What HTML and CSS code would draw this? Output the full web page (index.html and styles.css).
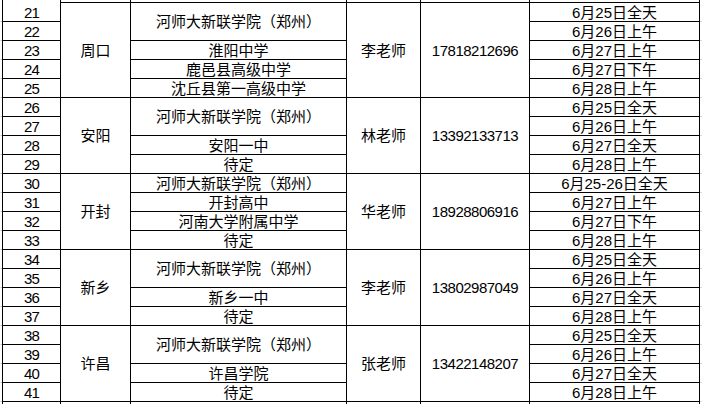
FILE: index.html
```html
<!DOCTYPE html>
<html lang="zh-CN">
<head>
<meta charset="utf-8">
<title>招生咨询安排</title>
<link rel="stylesheet" href="styles.css">
</head>
<body>
<div class="sheet">
  <div class="c stub stub-first"></div><div class="c stub"></div><div class="c stub"></div><div class="c stub"></div><div class="c stub"></div><div class="c stub"></div>

  <div class="c idx">21</div><div class="c s5">周口</div><div class="c s2">河师大新联学院（郑州）</div><div class="c s5">李老师</div><div class="c s5 num">17818212696</div><div class="c">6月25日全天</div>
  <div class="c idx">22</div><div class="c">6月26日上午</div>
  <div class="c idx">23</div><div class="c">淮阳中学</div><div class="c">6月27日上午</div>
  <div class="c idx">24</div><div class="c">鹿邑县高级中学</div><div class="c">6月27日下午</div>
  <div class="c idx">25</div><div class="c">沈丘县第一高级中学</div><div class="c">6月28日上午</div>

  <div class="c idx">26</div><div class="c s4">安阳</div><div class="c s2">河师大新联学院（郑州）</div><div class="c s4">林老师</div><div class="c s4 num">13392133713</div><div class="c">6月25日全天</div>
  <div class="c idx">27</div><div class="c">6月26日上午</div>
  <div class="c idx">28</div><div class="c">安阳一中</div><div class="c">6月27日全天</div>
  <div class="c idx">29</div><div class="c">待定</div><div class="c">6月28日上午</div>

  <div class="c idx">30</div><div class="c s4">开封</div><div class="c">河师大新联学院（郑州）</div><div class="c s4">华老师</div><div class="c s4 num">18928806916</div><div class="c">6月25-26日全天</div>
  <div class="c idx">31</div><div class="c">开封高中</div><div class="c">6月27日上午</div>
  <div class="c idx">32</div><div class="c">河南大学附属中学</div><div class="c">6月27日下午</div>
  <div class="c idx">33</div><div class="c">待定</div><div class="c">6月28日上午</div>

  <div class="c idx">34</div><div class="c s4">新乡</div><div class="c s2">河师大新联学院（郑州）</div><div class="c s4">李老师</div><div class="c s4 num">13802987049</div><div class="c">6月25日全天</div>
  <div class="c idx">35</div><div class="c">6月26日上午</div>
  <div class="c idx">36</div><div class="c">新乡一中</div><div class="c">6月27日全天</div>
  <div class="c idx">37</div><div class="c">待定</div><div class="c">6月28日上午</div>

  <div class="c idx">38</div><div class="c s4">许昌</div><div class="c s2">河师大新联学院（郑州）</div><div class="c s4">张老师</div><div class="c s4 num">13422148207</div><div class="c">6月25日全天</div>
  <div class="c idx">39</div><div class="c">6月26日上午</div>
  <div class="c idx">40</div><div class="c">许昌学院</div><div class="c">6月27日全天</div>
  <div class="c idx">41</div><div class="c">待定</div><div class="c">6月28日上午</div>

  <div class="c"></div><div class="c"></div><div class="c"></div><div class="c"></div><div class="c"></div><div class="c"></div>
</div>
</body>
</html>
```

FILE: styles.css
```css
html, body {
  margin: 0;
  padding: 0;
  width: 702px;
  height: 404px;
  overflow: hidden;
}

body {
  background-color: #fff;
  background-image: repeating-linear-gradient(to bottom, #fff 0 18px, #d9d9d9 18px 19px);
  background-position: 0 3px;
}

.sheet {
  display: grid;
  grid-template-columns: 57px 69px 215px 73px 108px 169px;
  grid-template-rows: 2px;
  grid-auto-rows: 18px;
  gap: 1px;
  padding: 0 1px;
  margin-left: 2px;
  width: max-content;
  background: #000;
}

.c {
  background: #fff;
  display: flex;
  align-items: center;
  justify-content: center;
  font-family: "Liberation Sans", "Noto Sans CJK SC", sans-serif;
  font-size: 15px;
  line-height: 18px;
  padding-top: 1px;
  box-sizing: border-box;
  color: #000;
  white-space: nowrap;
  overflow: hidden;
}

.stub {
  padding-top: 0;
}

.stub-first {
  margin-bottom: -1px;
}

.num {
  letter-spacing: -0.5px;
}

.idx {
  letter-spacing: -0.8px;
}

.s2 { grid-row: span 2; }
.s4 { grid-row: span 4; }
.s5 { grid-row: span 5; }
```
